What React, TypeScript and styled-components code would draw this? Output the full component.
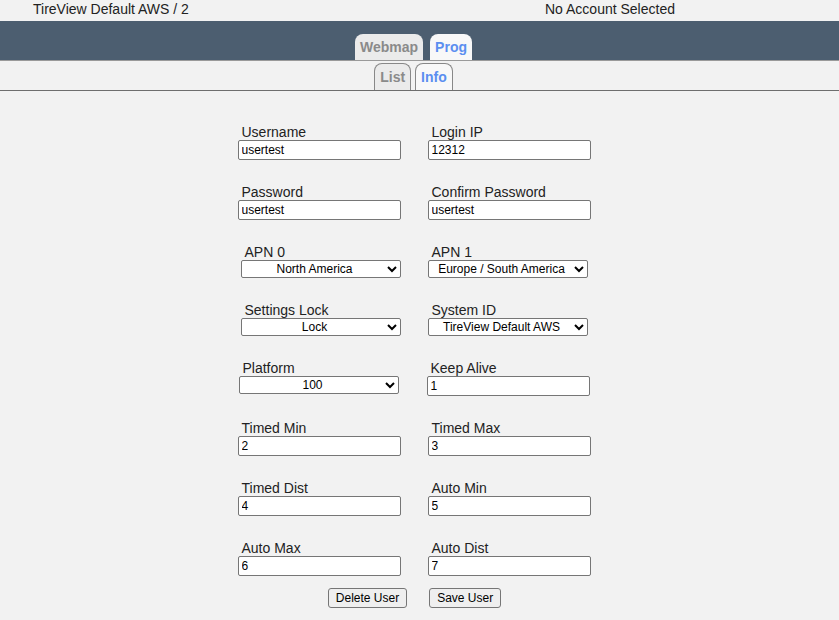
import React from "react";
import styled, { createGlobalStyle } from "styled-components";

const GlobalStyle = createGlobalStyle`
  body {
    margin: 0;
    background: #f2f2f2;
    font-family: "Liberation Sans", Arial, sans-serif;
    color: #222;
  }
`;

const TopBar = styled.div`
  display: grid;
  grid-template-columns: 512px auto;
  padding: 1px 0 0 33px;
  height: 20px;
  font-size: 14px;
  line-height: 16px;
`;

const NavBar = styled.div`
  height: 40px;
  box-sizing: border-box;
  background: #4c5e70;
  border-bottom: 1px solid #9a9a9a;
  display: flex;
  justify-content: center;
  align-items: flex-end;
  gap: 7px;
  padding-right: 12px;
`;

const Tab = styled.div<{ $active?: boolean }>`
  height: 26px;
  box-sizing: border-box;
  padding: 0 5px;
  border-radius: 8px 8px 0 0;
  background: ${(p) => (p.$active ? "#f8f8f8" : "#ebebeb")};
  color: ${(p) => (p.$active ? "#5b8ef0" : "#8a8a8a")};
  font-weight: bold;
  font-size: 14px;
  line-height: 27px;
`;

const SubBar = styled.div`
  height: 30px;
  box-sizing: border-box;
  border-bottom: 1px solid #6e6e6e;
  display: flex;
  justify-content: center;
  align-items: flex-end;
  gap: 4px;
  padding-right: 12px;
`;

const SubTab = styled(Tab)`
  height: 27px;
  padding: 0 5px;
  border: 1px solid #888;
  border-bottom: none;
  line-height: 26px;
`;

const Form = styled.div`
  display: grid;
  grid-template-columns: 166px 166px;
  column-gap: 24px;
  row-gap: 24px;
  justify-content: center;
  padding: 33px 10px 0 0;
`;

const Field = styled.div<{ $side: "left" | "right"; $nudge?: number }>`
  display: flex;
  flex-direction: column;
  justify-self: ${(p) => (p.$side === "left" ? "end" : "start")};
  margin-right: ${(p) => (p.$side === "left" ? 2 + (p.$nudge ?? 0) : 0)}px;
  margin-left: ${(p) => (p.$side === "right" ? 1 - (p.$nudge ?? 0) : 0)}px;
`;

const Label = styled.label`
  font-size: 14px;
  line-height: 16px;
  padding-left: 4px;
`;

const TextInput = styled.input`
  width: 163px;
  height: 20px;
  box-sizing: border-box;
  border: 1px solid #767676;
  border-radius: 2px;
  background: #fff;
  padding: 0 3px;
  font-family: "Liberation Sans", Arial, sans-serif;
  font-size: 12px;
  color: #000;
`;

const Select = styled.select`
  width: 160px;
  height: 18px;
  box-sizing: border-box;
  border: 1px solid #767676;
  border-radius: 2px;
  background: #fff;
  padding: 0;
  font-family: "Liberation Sans", Arial, sans-serif;
  font-size: 12px;
  color: #000;
  text-align: center;
  text-align-last: center;
`;

const Buttons = styled.div`
  display: flex;
  justify-content: center;
  gap: 22px;
  padding: 12px 10px 0 0;
`;

const Button = styled.button`
  height: 20px;
  box-sizing: border-box;
  padding: 0 7px;
  border: 1px solid #767676;
  border-radius: 3px;
  background: #efefef;
  font-family: "Liberation Sans", Arial, sans-serif;
  font-size: 12px;
  color: #000;
`;

type Item =
  | { label: string; value: string; kind: "input" }
  | { label: string; value: string; kind: "select"; options: string[] };

const rows: [Item, Item][] = [
  [
    { label: "Username", value: "usertest", kind: "input" },
    { label: "Login IP", value: "12312", kind: "input" },
  ],
  [
    { label: "Password", value: "usertest", kind: "input" },
    { label: "Confirm Password", value: "usertest", kind: "input" },
  ],
  [
    { label: "APN 0", value: "North America", kind: "select", options: ["North America", "Europe / South America"] },
    { label: "APN 1", value: "Europe / South America", kind: "select", options: ["North America", "Europe / South America"] },
  ],
  [
    { label: "Settings Lock", value: "Lock", kind: "select", options: ["Lock", "Unlock"] },
    { label: "System ID", value: "TireView Default AWS", kind: "select", options: ["TireView Default AWS"] },
  ],
  [
    { label: "Platform", value: "100", kind: "select", options: ["100", "200"] },
    { label: "Keep Alive", value: "1", kind: "input" },
  ],
  [
    { label: "Timed Min", value: "2", kind: "input" },
    { label: "Timed Max", value: "3", kind: "input" },
  ],
  [
    { label: "Timed Dist", value: "4", kind: "input" },
    { label: "Auto Min", value: "5", kind: "input" },
  ],
  [
    { label: "Auto Max", value: "6", kind: "input" },
    { label: "Auto Dist", value: "7", kind: "input" },
  ],
];

const Control = ({ item }: { item: Item }) =>
  item.kind === "input" ? (
    <TextInput type="text" defaultValue={item.value} />
  ) : (
    <Select defaultValue={item.value}>
      {item.options.map((o) => (
        <option key={o}>{o}</option>
      ))}
    </Select>
  );

export default function App() {
  return (
    <>
      <GlobalStyle />
      <TopBar>
        <span>TireView Default AWS / 2</span>
        <span>No Account Selected</span>
      </TopBar>
      <NavBar>
        <Tab>Webmap</Tab>
        <Tab $active>Prog</Tab>
      </NavBar>
      <SubBar>
        <SubTab>List</SubTab>
        <SubTab $active>Info</SubTab>
      </SubBar>
      <Form>
        {rows.map(([a, b], i) => (
          <React.Fragment key={i}>
            <Field $side="left" $nudge={a.label === "Platform" ? 2 : 0}>
              <Label>{a.label}</Label>
              <Control item={a} />
            </Field>
            <Field $side="right" $nudge={b.label === "Keep Alive" ? 1 : 0}>
              <Label>{b.label}</Label>
              <Control item={b} />
            </Field>
          </React.Fragment>
        ))}
      </Form>
      <Buttons>
        <Button>Delete User</Button>
        <Button>Save User</Button>
      </Buttons>
    </>
  );
}
